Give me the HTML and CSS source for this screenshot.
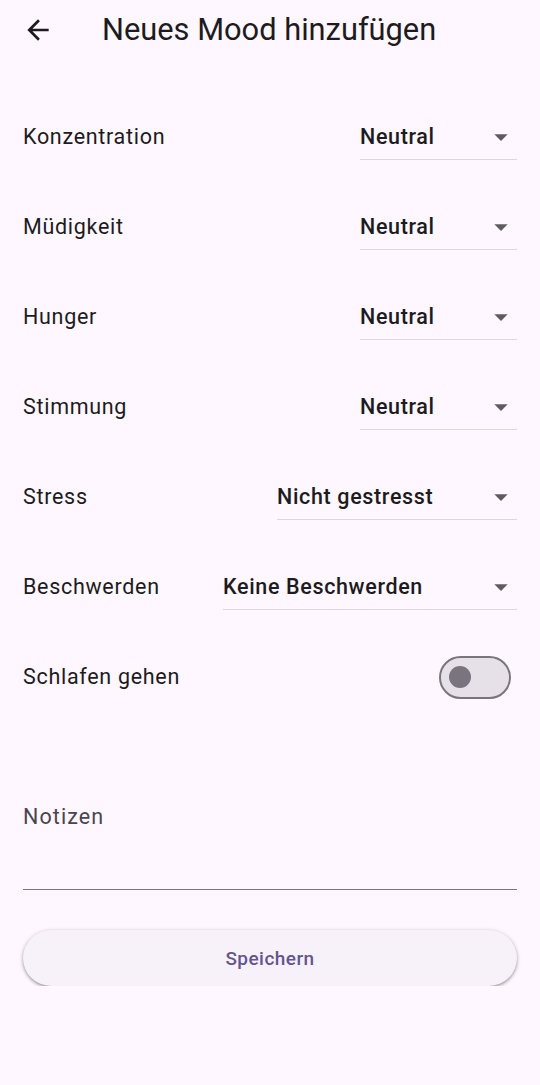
FILE: index.html
```html
<!DOCTYPE html>
<html lang="de">
<head>
    <meta charset="UTF-8">
    <meta name="viewport" content="width=device-width, initial-scale=1.0">
    <title>Neues Mood hinzufügen</title>
    <link rel="stylesheet" href="styles.css">
</head>
<body>
    <header class="app-bar">
        <button class="back-button" aria-label="Zurück">
            <svg viewBox="0 0 24 24" width="32" height="32"><path d="M20 11H7.83l5.59-5.59L12 4l-8 8 8 8 1.41-1.41L7.83 13H20v-2z" fill="#1d1b20"/></svg>
        </button>
        <h1>Neues Mood hinzufügen</h1>
    </header>

    <main class="form">
        <div class="row">
            <span class="label">Konzentration</span>
            <div class="dropdown w-neutral">
                <span class="value">Neutral</span>
                <svg viewBox="0 0 24 24" width="32" height="32"><path d="M7 10l5 5 5-5z"/></svg>
            </div>
        </div>
        <div class="row">
            <span class="label">Müdigkeit</span>
            <div class="dropdown w-neutral">
                <span class="value">Neutral</span>
                <svg viewBox="0 0 24 24" width="32" height="32"><path d="M7 10l5 5 5-5z"/></svg>
            </div>
        </div>
        <div class="row">
            <span class="label">Hunger</span>
            <div class="dropdown w-neutral">
                <span class="value">Neutral</span>
                <svg viewBox="0 0 24 24" width="32" height="32"><path d="M7 10l5 5 5-5z"/></svg>
            </div>
        </div>
        <div class="row">
            <span class="label">Stimmung</span>
            <div class="dropdown w-neutral">
                <span class="value">Neutral</span>
                <svg viewBox="0 0 24 24" width="32" height="32"><path d="M7 10l5 5 5-5z"/></svg>
            </div>
        </div>
        <div class="row">
            <span class="label">Stress</span>
            <div class="dropdown w-stress">
                <span class="value">Nicht gestresst</span>
                <svg viewBox="0 0 24 24" width="32" height="32"><path d="M7 10l5 5 5-5z"/></svg>
            </div>
        </div>
        <div class="row">
            <span class="label">Beschwerden</span>
            <div class="dropdown w-beschwerden">
                <span class="value">Keine Beschwerden</span>
                <svg viewBox="0 0 24 24" width="32" height="32"><path d="M7 10l5 5 5-5z"/></svg>
            </div>
        </div>
        <div class="row">
            <span class="label">Schlafen gehen</span>
            <div class="switch">
                <span class="thumb"></span>
            </div>
        </div>

        <div class="notes">
            <span class="notes-label">Notizen</span>
        </div>

        <button class="save-button">Speichern</button>
    </main>
</body>
</html>
```

FILE: styles.css
```css
body {
    margin: 0;
    background-color: #fef7ff;
    color: #1d1b20;
    font-family: Roboto, 'Noto Sans', sans-serif;
}
.app-bar {
    height: 60px;
    display: flex;
    align-items: center;
    padding-left: 22px;
}
.back-button {
    width: 32px;
    height: 32px;
    padding: 0;
    border: none;
    background: none;
    display: flex;
}
.app-bar h1 {
    margin: 0 0 0 48px;
    font-size: 30.8px;
    font-weight: 400;
    line-height: 36px;
}
.form {
    padding: 32px 23px 0 23px;
}
.row {
    height: 90px;
    display: flex;
    align-items: center;
    justify-content: space-between;
}
.label {
    font-size: 21.5px;
    line-height: 28px;
    letter-spacing: 0.7px;
}
.dropdown {
    height: 45px;
    box-sizing: border-box;
    padding: 8px 0;
    display: flex;
    align-items: center;
    justify-content: space-between;
    border-bottom: 1.5px solid #dcd6df;
}
.dropdown .value {
    font-size: 21.5px;
    font-weight: 500;
    line-height: 28px;
    letter-spacing: 0.65px;
}
.dropdown svg {
    fill: #5e5c62;
}
.w-neutral {
    width: 157px;
}
.w-stress {
    width: 240px;
}
.w-beschwerden {
    width: 294px;
}
.switch {
    width: 72px;
    height: 43px;
    box-sizing: border-box;
    border: 2.7px solid #79747e;
    border-radius: 22px;
    background-color: #e6e0e9;
    display: flex;
    align-items: center;
    padding-left: 8px;
    margin-right: 6px;
}
.thumb {
    width: 22px;
    height: 22px;
    border-radius: 50%;
    background-color: #79747e;
}
.notes {
    margin-top: 81px;
    height: 86px;
    border-bottom: 1.5px solid #79747e;
}
.notes-label {
    display: block;
    font-size: 21.5px;
    line-height: 28px;
    color: #49454f;
    letter-spacing: 1.1px;
}
.save-button {
    display: block;
    width: 100%;
    height: 56px;
    margin-top: 40px;
    border: none;
    border-radius: 28px;
    background-color: #f7f2fa;
    color: #65558f;
    font-family: Roboto, 'Noto Sans', sans-serif;
    font-size: 19px;
    font-weight: 500;
    letter-spacing: 0.45px;
    box-shadow: 0 1.5px 3px rgba(0, 0, 0, 0.3), 0 1px 4px 1px rgba(0, 0, 0, 0.1);
}
```
